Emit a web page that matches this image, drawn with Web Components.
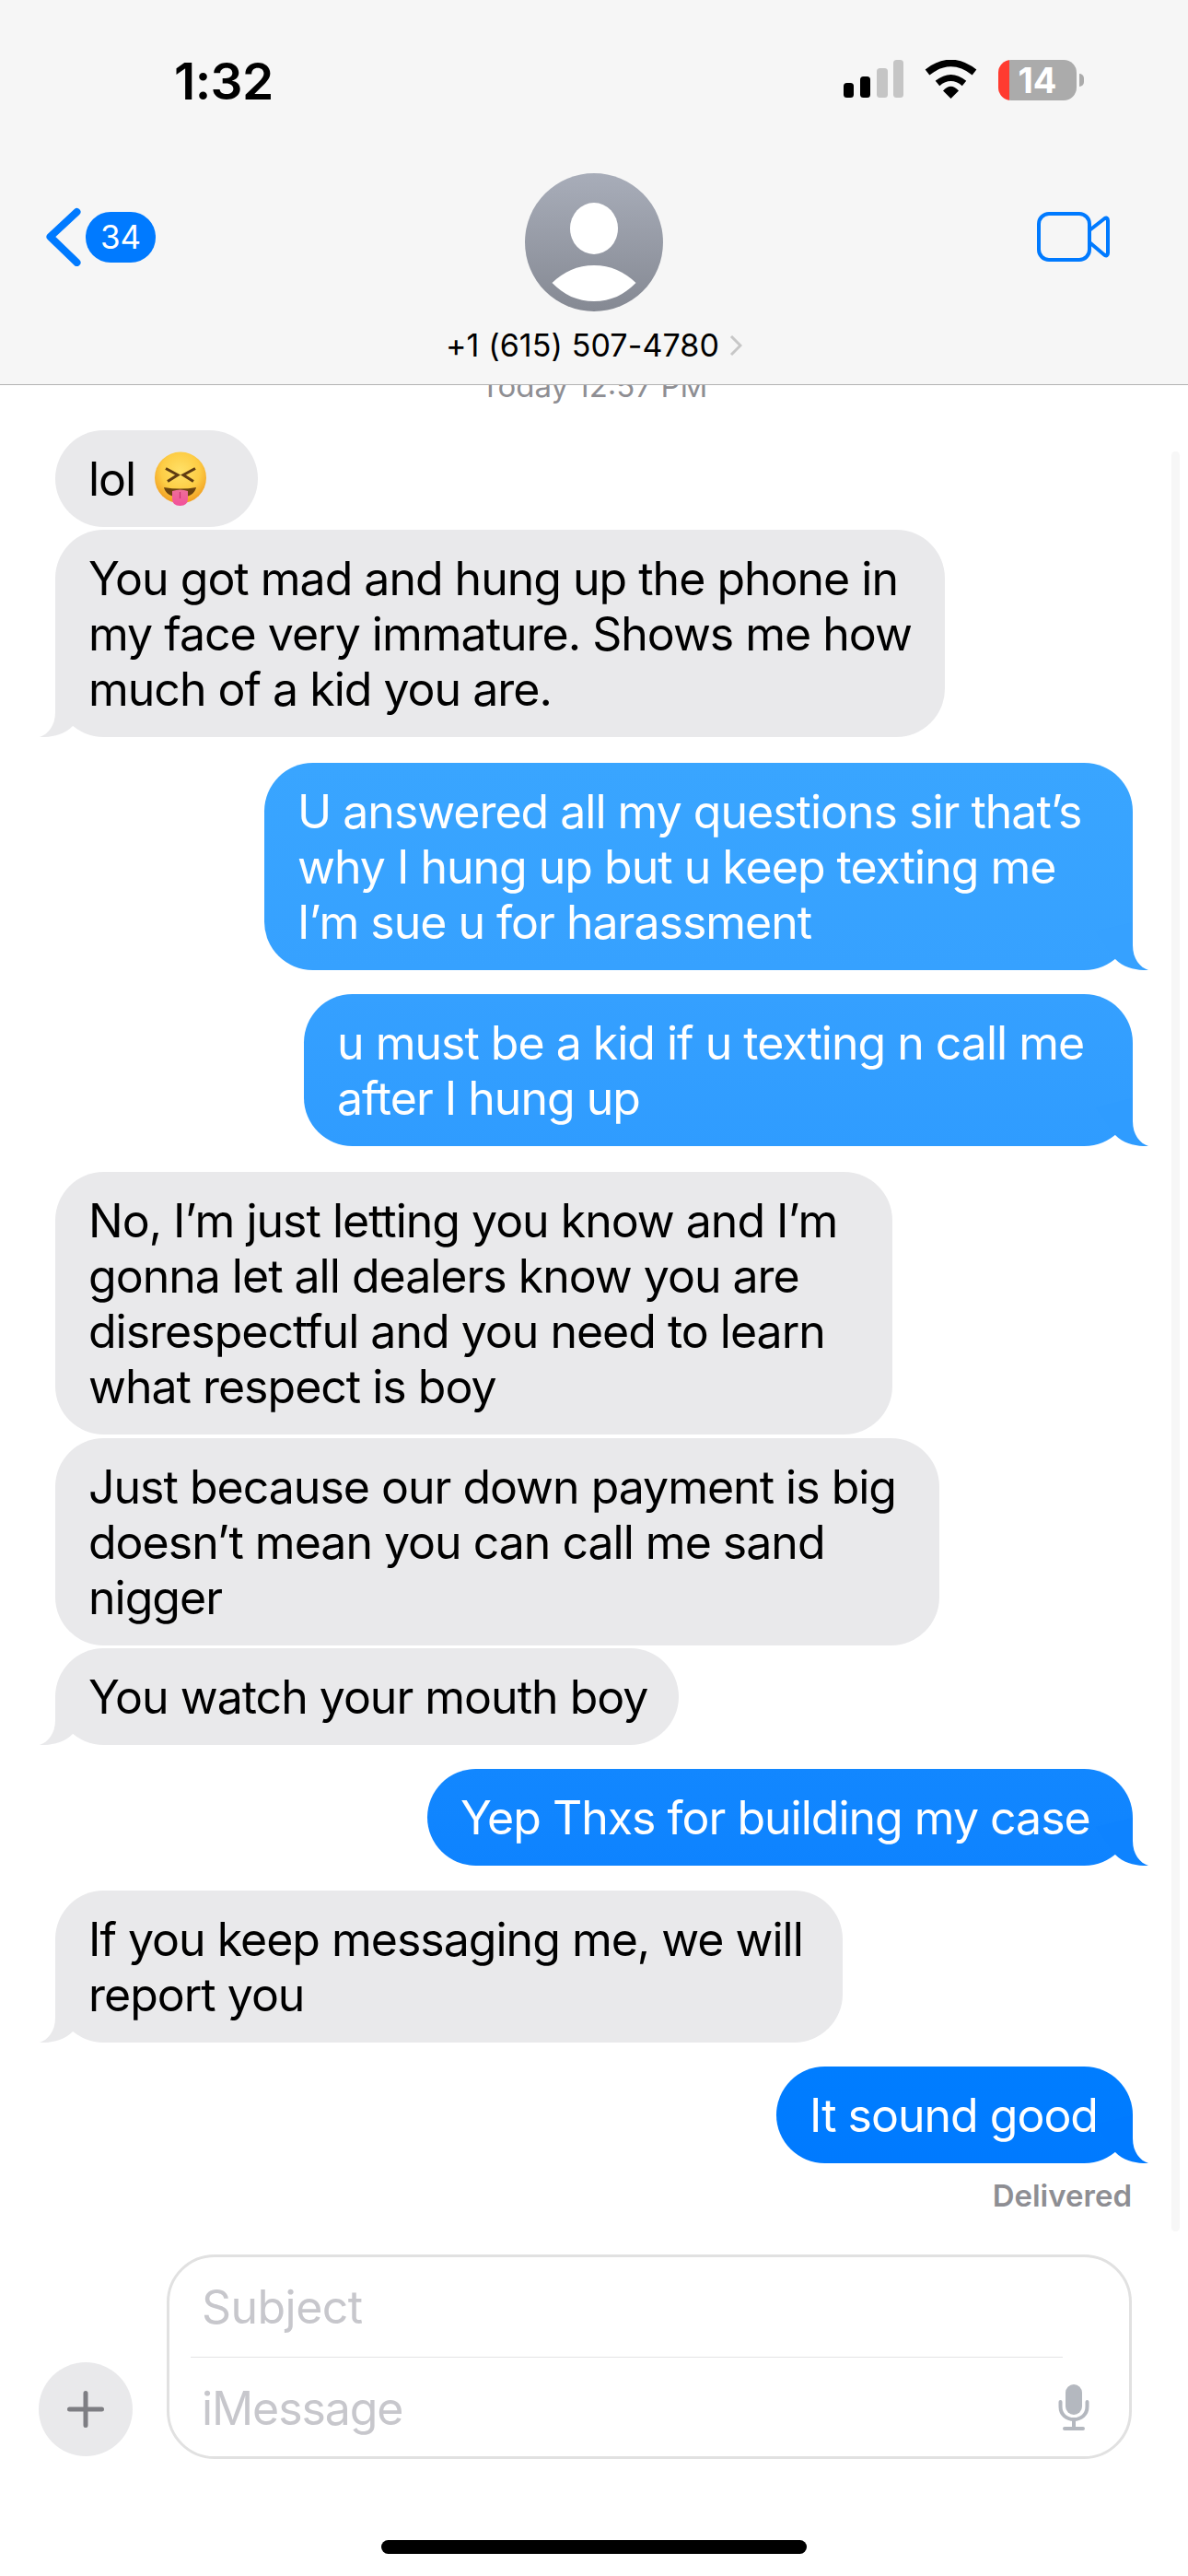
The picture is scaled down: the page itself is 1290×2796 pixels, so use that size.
<!DOCTYPE html>
<html lang="en">
<head>
<meta charset="utf-8">
<title>Messages</title>
<style>
  html, body { margin: 0; padding: 0; background: #fff; }
  body { font-family: Inter, "Liberation Sans", sans-serif; }
</style>
</head>
<body>
<chat-screen>
  <chat-header slot="header" phone="+1 (615) 507-4780" unread="34" time="1:32" battery="14"></chat-header>

  <day-label>Today 12:57 PM</day-label>

  <chat-bubble from="in" width="220" gap="29">lol <emoji-face></emoji-face></chat-bubble>
  <chat-bubble from="in" width="966" gap="3" tail>You got mad and hung up the phone in<br>my face very immature. Shows me how<br>much of a kid you are.</chat-bubble>

  <chat-bubble from="out" width="943" gap="28" tail style="--top:#39a5ff;--bot:#36a1ff">U answered all my questions sir that’s<br>why I hung up but u keep texting me<br>I’m sue u for harassment</chat-bubble>
  <chat-bubble from="out" width="900" gap="26" tail style="--top:#35a0ff;--bot:#2f9cff">u must be a kid if u texting n call me<br>after I hung up</chat-bubble>

  <chat-bubble from="in" width="909" gap="28">No, I’m just letting you know and I’m<br>gonna let all dealers know you are<br>disrespectful and you need to learn<br>what respect is boy</chat-bubble>
  <chat-bubble from="in" width="960" gap="4">Just because our down payment is big<br>doesn’t mean you can call me sand<br>nigger</chat-bubble>
  <chat-bubble from="in" width="677" gap="3" tail>You watch your mouth boy</chat-bubble>

  <chat-bubble from="out" width="766" gap="26" tail style="--top:#1287ff;--bot:#0e83ff">Yep Thxs for building my case</chat-bubble>

  <chat-bubble from="in" width="855" gap="27" tail>If you keep messaging me, we will<br>report you</chat-bubble>

  <chat-bubble from="out" width="387" gap="26" tail style="--top:#007dff;--bot:#007aff">It sound good</chat-bubble>
  <delivery-note>Delivered</delivery-note>

  <compose-bar slot="footer"></compose-bar>
  <home-indicator slot="footer"></home-indicator>
</chat-screen>

<script>
// Page frame: header on top, message list in the middle, compose bar below
class ChatScreen extends HTMLElement {
  constructor() {
    super();
    this.attachShadow({ mode: 'open' });
    this.shadowRoot.innerHTML = `
      <style>
        :host {
          display: flex;
          flex-direction: column;
          width: 1290px;
          height: 2796px;
          background: #fff;
          overflow: hidden;
        }
        .list {
          position: relative;
          flex: 1;
          min-height: 0;
          overflow: hidden;
          display: flex;
          flex-direction: column;
        }
        /* faint scroll indicator, lies over the list */
        .scroller {
          position: absolute;
          top: 72px;
          right: 9px;
          width: 9px;
          height: 1932px;
          border-radius: 5px;
          background: #f7f7f7;
        }
      </style>
      <slot name="header"></slot>
      <div class="list">
        <div class="scroller"></div>
        <slot></slot>
      </div>
      <slot name="footer"></slot>
    `;
  }
}

class ChatHeader extends HTMLElement {
  constructor() {
    super();
    this.attachShadow({ mode: 'open' });
    const phone = this.getAttribute('phone');
    const unread = this.getAttribute('unread');
    const time = this.getAttribute('time');
    const battery = this.getAttribute('battery');
    this.shadowRoot.innerHTML = `
      <style>
        :host {
          display: block;
          box-sizing: border-box;
          height: 418px;
          padding-top: 64px;
          background: #f6f6f6;
          border-bottom: 1px solid #b3b3b3;
          flex: none;
          color: #000;
        }
        .status {
          display: flex;
          justify-content: space-between;
          align-items: center;
          height: 45px;
          padding: 0 113px 0 189px;
        }
        .time {
          font-size: 55px;
          font-weight: 600;
          line-height: 45px;
          letter-spacing: -0.6px;
          padding-top: 4px;
        }
        .icons { display: flex; align-items: flex-start; gap: 23px; }
        .icons svg { display: block; }
        .battery { display: flex; align-items: center; gap: 3px; }
        .cell {
          width: 85px;
          height: 44px;
          border-radius: 14px;
          background: linear-gradient(90deg, #ff3b30 12px, #ababab 12px);
          color: #fff;
          font-size: 38px;
          font-weight: 700;
          line-height: 44px;
          text-align: center;
          box-sizing: border-box;
        }
        .nub {
          width: 5px;
          height: 14px;
          background: #ababab;
          border-radius: 0 7px 7px 0;
        }
        .nav {
          display: grid;
          grid-template-columns: 1fr auto 1fr;
          margin-top: 79px;
          padding: 0 48px;
        }
        .back { display: flex; align-items: center; gap: 5px; align-self: start; margin-top: 37px; }
        .back svg { display: block; }
        .badge {
          width: 76px;
          height: 55px;
          border-radius: 27px;
          background: #007aff;
          color: #fff;
          font-size: 35px;
          line-height: 55px;
          text-align: center;
        }
        .contact { display: flex; flex-direction: column; align-items: center; }
        .avatar { display: block; }
        .name {
          display: flex;
          align-items: center;
          gap: 11px;
          margin-top: 18px;
          font-size: 34px;
          letter-spacing: 0.1px;
          line-height: 38px;
          white-space: nowrap;
        }
        .video { justify-self: end; margin: 42px 36px 0 0; display: block; }
      </style>
      <div class="status">
        <div class="time">${time}</div>
        <div class="icons">
          <svg width="65" height="43" viewBox="0 0 65 43">
            <rect x="0" y="25" width="11" height="16" rx="3.5" fill="#000"/>
            <rect x="18" y="18" width="11" height="23" rx="3.5" fill="#000"/>
            <rect x="36" y="9" width="12" height="32" rx="3.5" fill="#c5c5c5"/>
            <rect x="54" y="0" width="11" height="41" rx="3.5" fill="#c5c5c5"/>
          </svg>
          <svg width="57" height="43" viewBox="0 0 57 43">
            <path d="M3 13.5Q28.5 -6.5 54 13.5" fill="none" stroke="#000" stroke-width="7.5"/>
            <path d="M14 25.5Q28.5 13.5 43 25.5" fill="none" stroke="#000" stroke-width="7"/>
            <path d="M28.5 42L20 33.5Q28.5 24 37 33.5Z" fill="#000"/>
          </svg>
          <div class="battery">
            <div class="cell">${battery}</div>
            <div class="nub"></div>
          </div>
        </div>
      </div>
      <div class="nav">
        <div class="back">
          <svg width="40" height="64" viewBox="0 0 40 64">
            <path d="M35.5 5L6.5 32L35.5 60" fill="none" stroke="#007aff" stroke-width="8" stroke-linecap="round" stroke-linejoin="round"/>
          </svg>
          <div class="badge">${unread}</div>
        </div>
        <div class="contact">
          <svg class="avatar" width="150" height="150" viewBox="0 0 150 150">
            <defs>
              <linearGradient id="av" x1="0" y1="0" x2="0" y2="1">
                <stop offset="0" stop-color="#a8adb9"/>
                <stop offset="1" stop-color="#858993"/>
              </linearGradient>
            </defs>
            <circle cx="75" cy="75" r="75" fill="url(#av)"/>
            <ellipse cx="75" cy="60" rx="26" ry="28" fill="#fff"/>
            <path d="M29.5 119C42 107 57 100 75 100C93 100 108 107 120.5 119C108 132 93 139 75 139C57 139 42 132 29.5 119Z" fill="#fff"/>
          </svg>
          <div class="name">
            <span>${phone}</span>
            <svg width="14" height="24" viewBox="0 0 14 24">
              <path d="M2 2L12 12L2 22" fill="none" stroke="#c7c7c7" stroke-width="3"/>
            </svg>
          </div>
        </div>
        <svg class="video" width="80" height="54" viewBox="0 0 80 54">
          <rect x="2" y="2" width="55" height="50" rx="11" fill="none" stroke="#007aff" stroke-width="4"/>
          <path d="M57 20L73 7.5Q77 5 77 9.5V44.5Q77 49 73 46.5L57 33" fill="none" stroke="#007aff" stroke-width="4" stroke-linejoin="round"/>
        </svg>
      </div>
    `;
  }
}

class DayLabel extends HTMLElement {
  constructor() {
    super();
    this.attachShadow({ mode: 'open' });
    this.shadowRoot.innerHTML = `
      <style>
        :host {
          display: block;
          flex: none;
          margin-top: -17px;
          height: 37px;
          font-size: 33px;
          line-height: 37px;
          color: #8e8e93;
          text-align: center;
        }
      </style>
      <slot></slot>
    `;
  }
}

// One message. from = in | out, tail = draws the little hook at the bottom corner
class ChatBubble extends HTMLElement {
  constructor() {
    super();
    this.attachShadow({ mode: 'open' });
    const from = this.getAttribute('from') || 'in';
    const width = this.getAttribute('width');
    const gap = this.getAttribute('gap') || 0;
    const tail = this.hasAttribute('tail');
    this.shadowRoot.innerHTML = `
      <style>
        :host {
          display: block;
          position: relative;
          flex: none;
          box-sizing: border-box;
          width: ${width}px;
          margin-top: ${gap}px;
          padding: 22.5px 0 22.5px 36px;
          border-radius: 52.5px;
          font-size: 50px;
          line-height: 60px;
          letter-spacing: -1px;
          white-space: nowrap;
          --fill: #e9e9eb;
          color: #000;
          background: var(--fill);
        }
        :host([from="in"]) { margin-left: 60px; }
        :host([from="out"]) {
          margin-left: ${1230 - width}px;
          color: #fff;
          --fill: var(--bot);
          background: linear-gradient(var(--top), var(--bot));
        }
        .text { position: relative; z-index: 1; }
        /* hook sticks out of the bubble corner */
        .tail { position: absolute; bottom: 0; width: 60px; height: 60px; display: block; }
        .tail path { fill: var(--fill); }
        .right { right: -20px; }
        .left { left: -20px; transform: scaleX(-1); }
      </style>
      <span class="text"><slot></slot></span>
      ${tail ? `<svg class="tail ${from === 'out' ? 'right' : 'left'}" viewBox="0 0 60 60">
        <path d="M40 8L40 33C40 48 48 57 57 60C45 60.5 31 58 21 48L0 18Z"/>
      </svg>` : ''}
    `;
  }
}

// Squinting face with tongue. The box is shorter than the drawing so the line keeps its height
class EmojiFace extends HTMLElement {
  constructor() {
    super();
    this.attachShadow({ mode: 'open' });
    this.shadowRoot.innerHTML = `
      <style>
        :host {
          display: inline-block;
          width: 56px;
          height: 50px;
          margin-left: 8px;
          vertical-align: -8px;
        }
        svg { display: block; margin-top: -6px; }
      </style>
      <svg width="56" height="60" viewBox="0 0 56 60">
        <defs>
          <radialGradient id="face" cx="0.5" cy="0.38" r="0.62">
            <stop offset="0" stop-color="#ffe168"/>
            <stop offset="0.6" stop-color="#fdcd45"/>
            <stop offset="1" stop-color="#f19d20"/>
          </radialGradient>
          <linearGradient id="tongue" x1="0" y1="0" x2="0" y2="1">
            <stop offset="0" stop-color="#ee6f98"/>
            <stop offset="1" stop-color="#f2509a"/>
          </linearGradient>
        </defs>
        <circle cx="28" cy="28.5" r="28" fill="url(#face)"/>
        <path d="M12 18.5L25 25.5L14 32.5M44 18.5L31 25.5L42 32.5" fill="none" stroke="#5f3c12" stroke-width="3"/>
        <path d="M10 39Q28 42 45 39Q43 49 28 50Q12 49 10 39Z" fill="#6b430f"/>
        <path d="M19 43Q28 40 36 43V51Q36 59 27.5 59Q19 59 19 51Z" fill="url(#tongue)"/>
        <path d="M27.5 44V51" stroke="#c9346f" stroke-width="1.2"/>
      </svg>
    `;
  }
}

class DeliveryNote extends HTMLElement {
  constructor() {
    super();
    this.attachShadow({ mode: 'open' });
    this.shadowRoot.innerHTML = `
      <style>
        :host {
          display: block;
          flex: none;
          margin-top: 17px;
          padding-right: 61px;
          font-size: 33px;
          font-weight: 600;
          line-height: 36px;
          color: #8e8e93;
          text-align: right;
        }
      </style>
      <slot></slot>
    `;
  }
}

class ComposeBar extends HTMLElement {
  constructor() {
    super();
    this.attachShadow({ mode: 'open' });
    this.shadowRoot.innerHTML = `
      <style>
        :host {
          display: flex;
          flex: none;
          align-items: flex-end;
          gap: 37px;
          height: 222px;
          padding: 0 61px 0 42px;
          box-sizing: border-box;
        }
        .plus {
          flex: none;
          width: 102px;
          height: 102px;
          margin-bottom: 3px;
          border-radius: 50%;
          background: #e9e9eb;
          display: flex;
          align-items: center;
          justify-content: center;
        }
        .field {
          flex: 1;
          box-sizing: border-box;
          height: 222px;
          border: 3px solid #e1e1e1;
          border-radius: 52px;
          display: flex;
          flex-direction: column;
        }
        .row {
          display: flex;
          align-items: center;
          justify-content: space-between;
          padding: 0 42px 0 35px;
          font-size: 50px;
          letter-spacing: -0.55px;
          color: #c7c7cc;
        }
        .subject { height: 108px; }
        .message { flex: 1; letter-spacing: -1.1px; }
        .message span { padding-top: 3px; }
        .rule { height: 1px; margin: 0 72px 0 23px; background: #e3e3e5; }
      </style>
      <div class="plus">
        <svg width="40" height="40" viewBox="0 0 40 40">
          <path d="M20 2.5V37.5M2.5 20H37.5" fill="none" stroke="#7e7e83" stroke-width="5" stroke-linecap="round"/>
        </svg>
      </div>
      <div class="field">
        <div class="row subject">Subject</div>
        <div class="rule"></div>
        <div class="row message">
          <span>iMessage</span>
          <svg width="36" height="52" viewBox="0 0 36 52">
            <rect x="9" y="1" width="18" height="33" rx="9" fill="#b4b8bf"/>
            <path d="M3.5 20V25C3.5 34 10 39 18 39C26 39 32.5 34 32.5 25V20" fill="none" stroke="#b4b8bf" stroke-width="4" stroke-linecap="round"/>
            <path d="M18 39V48M8 49H28" fill="none" stroke="#b4b8bf" stroke-width="4" stroke-linecap="round"/>
          </svg>
        </div>
      </div>
    `;
  }
}

class HomeIndicator extends HTMLElement {
  constructor() {
    super();
    this.attachShadow({ mode: 'open' });
    this.shadowRoot.innerHTML = `
      <style>
        :host {
          display: block;
          flex: none;
          width: 462px;
          height: 15px;
          margin: 88px auto 24px;
          border-radius: 8px;
          background: #000;
        }
      </style>
    `;
  }
}

customElements.define('chat-screen', ChatScreen);
customElements.define('chat-header', ChatHeader);
customElements.define('day-label', DayLabel);
customElements.define('chat-bubble', ChatBubble);
customElements.define('emoji-face', EmojiFace);
customElements.define('delivery-note', DeliveryNote);
customElements.define('compose-bar', ComposeBar);
customElements.define('home-indicator', HomeIndicator);
</script>
</body>
</html>
